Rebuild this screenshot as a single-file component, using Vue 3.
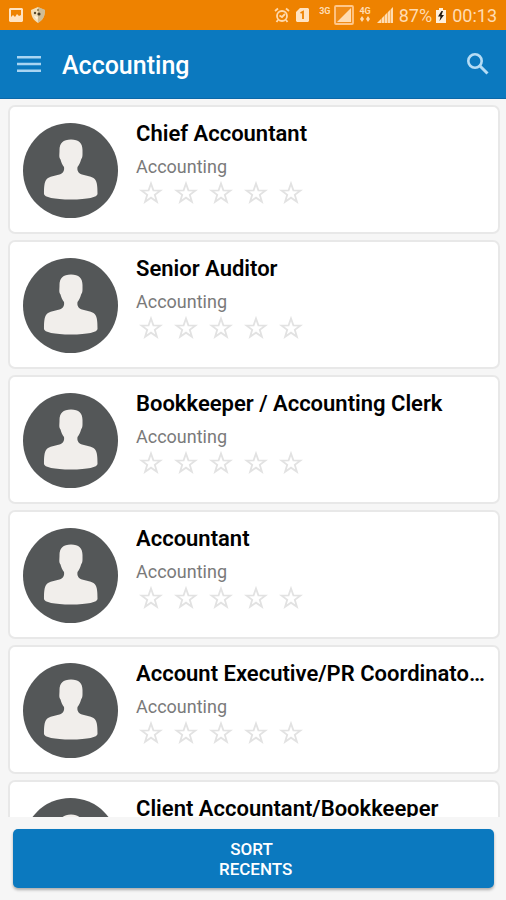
<script setup>
import { ref } from "vue";

const category = "Accounting";
const jobs = ref([
  { id: 1, title: "Chief Accountant" },
  { id: 2, title: "Senior Auditor" },
  { id: 3, title: "Bookkeeper / Accounting Clerk" },
  { id: 4, title: "Accountant" },
  { id: 5, title: "Account Executive/PR Coordinator Assistant" },
  { id: 6, title: "Client Accountant/Bookkeeper" },
]);
const sortLabel = "SORT \n RECENTS";
</script>

<template>
  <div class="screen">
    <div class="status-bar">
      <div class="status-group">
        <svg width="16" height="16" viewBox="0 0 16 16">
          <path
            fill="#ffe3c2"
            fill-rule="evenodd"
            d="M2 1h12l1 1v12l-1 1H2l-1-1V2zM3 3v7l2-2 2 2 2-3 2 2 2-1V3z"
          />
        </svg>
        <svg width="16" height="16" viewBox="0 0 16 16">
          <path fill="#f3dfb8" d="M8 0l7 3c0 6-2 10-7 13C3 13 1 9 1 3z" />
          <path fill="#b8a780" d="M8 0l7 3c0 6-2 10-7 13z" opacity=".6" />
          <circle cx="5" cy="6" r="1.2" fill="#5b4a2a" />
          <circle cx="9" cy="7" r="1.6" fill="#4b3d24" />
          <circle cx="8" cy="3" r="1" fill="#8a7748" />
          <path fill="#fff3dc" d="M4 9l4 1-1 3z" />
        </svg>
      </div>
      <div class="status-group status-right">
        <svg width="16" height="16" viewBox="0 0 16 16" fill="none" stroke="#ffd9ac" stroke-width="1.8">
          <circle cx="8" cy="9" r="5" />
          <path d="M1 4l3-2.500M15 4l-3-2.500M5.500 8.500L8 10l3-3M4 13l-1.500 2M12 13l1.500 2" />
        </svg>
        <svg class="sim" width="13" height="16" viewBox="0 0 13 16">
          <path fill="#ffe3c2" d="M4 1h8l1 1v12l-1 1H1l-1-1V5z" />
          <path fill="none" stroke="#ee8200" stroke-width="1.8" d="M4.500 6L7 4.800V12" />
        </svg>
        <span class="network">3G</span>
        <svg width="20" height="20" viewBox="0 0 20 20">
          <rect x="1" y="1" width="18" height="18" rx="1" fill="#f08c18" stroke="#ffc78a" stroke-width="1.8" />
          <path fill="#ffdcb2" d="M17 3v14H3z" />
        </svg>
        <span class="network data">
          4G
          <svg width="10" height="6" viewBox="0 0 10 6" fill="#ffd9ac">
            <path d="M0 3l2-3 2 3-2 3zM6 3l2-3 2 3-2 3z" />
          </svg>
        </span>
        <svg width="16" height="16" viewBox="0 0 16 16">
          <path fill="#ffdcb2" d="M16 0v16H0z" />
          <path stroke="#ee8200" stroke-width=".5" d="M4.500 10v6M7.500 7v9M10.500 4v12M13.500 1v15" />
        </svg>
        <span class="battery-level">87%</span>
        <svg width="10" height="15" viewBox="0 0 10 15">
          <path fill="#fff0dc" d="M3 0h4v2h3v13H0V2h3z" />
          <path fill="#241a10" d="M5.500 3L2 8.500h2.500L3.500 13 8 7H5.500L7 3z" />
        </svg>
        <span class="clock">00:13</span>
      </div>
    </div>

    <header class="app-bar">
      <button class="icon-button" type="button" aria-label="Menu">
        <svg width="24" height="18" viewBox="0 0 24 18" stroke="#a9d5f2" stroke-width="2.4">
          <path d="M0 2.200h24M0 9h24M0 15.800h24" />
        </svg>
      </button>
      <h1>{{ category }}</h1>
      <button class="icon-button" type="button" aria-label="Search">
        <svg width="22" height="22" viewBox="0 0 22 22" fill="none" stroke="#b5dcf5">
          <circle cx="8" cy="8" r="6.700" stroke-width="2.600" />
          <path d="M13 13l7.500 7.500" stroke-width="3" />
        </svg>
      </button>
    </header>

    <main class="job-list">
      <article v-for="job in jobs" :key="job.id" class="job-card">
        <svg class="avatar" viewBox="0 0 95 95">
          <circle cx="47.500" cy="47.500" r="47.500" fill="#545758" />
          <path
            fill="#f1eeeb"
            d="M48 16.500C40 16.500 36.500 20.500 36.500 27c0 5-.8 7 1 9.500.8 3.500 2 5.500 3.500 7.500.5 3.500-.5 6-4.500 7.500-4 1.200-8 1.500-11.500 3.500-3.500 2.500-4 7-4 16 0 3 10 5.500 27 5.500S74.500 74 74.500 71c0-9-.5-13.500-4-16-3.500-2-7.500-2.300-11.500-3.500-4-1.500-5-4-4.500-7.500 1.500-2 2.800-4 3.600-7.500 1.800-2.500 1.400-4.500 1.400-9.500 0-6.500-3.500-10.500-11.500-10.500z"
          />
        </svg>
        <div class="job-info">
          <h2>{{ job.title }}</h2>
          <p>{{ category }}</p>
          <div class="rating" role="img" aria-label="0 of 5 stars">
            <svg v-for="n in 5" :key="n" width="24" height="24" viewBox="0 0 24 24">
              <path
                d="M12 2.500l2.400 6.900 7.200.1-5.800 4.300 2.100 7L12 16.700l-5.900 4.100 2.100-7-5.800-4.300 7.200-.1z"
              />
            </svg>
          </div>
        </div>
      </article>
    </main>

    <footer class="footer">
      <button class="sort-button" type="button">{{ sortLabel }}</button>
    </footer>
  </div>
</template>

<style>
body {
  margin: 0;
}
</style>

<style scoped>
.screen {
  display: flex;
  flex-direction: column;
  height: 100vh;
  background: #f6f6f6;
  font-family: Roboto, sans-serif;
}
.status-bar {
  flex: none;
  display: flex;
  justify-content: space-between;
  align-items: center;
  height: 30px;
  padding: 0 9px 0 8px;
  background: #ee8200;
  color: #ffdcb2;
}
.status-group {
  display: flex;
  align-items: center;
  gap: 6px;
}
.status-right {
  gap: 4px;
}
.sim {
  margin: 0 6px 0 2px;
}
.network {
  align-self: flex-start;
  padding-top: 4px;
  font-size: 9px;
  font-weight: 700;
  line-height: 10px;
}
.data {
  display: flex;
  flex-direction: column;
  align-items: center;
  padding-left: 1px;
  padding-right: 2px;
}
.battery-level,
.clock {
  padding-top: 2px;
  padding-left: 2px;
  font-size: 18px;
  line-height: 24px;
}
.app-bar {
  flex: none;
  display: flex;
  align-items: center;
  height: 69px;
  padding: 0 17px;
  background: #0b79bf;
  border-bottom: 1px solid #0b68a8;
  box-sizing: border-box;
}
.icon-button {
  display: flex;
  padding: 0;
  border: none;
  background: none;
  cursor: pointer;
}
h1 {
  flex: 1;
  margin: 0 0 0 21px;
  padding-top: 4px;
  color: #fff;
  font-size: 25px;
  font-weight: 500;
  line-height: 32px;
}
.job-list {
  flex: 1;
  min-height: 0;
  display: flex;
  flex-direction: column;
  gap: 6px;
  padding: 6px 6px 0 8px;
  overflow: hidden;
}
.job-card {
  flex: none;
  display: flex;
  gap: 18px;
  padding: 16px 9px 14px 13px;
  border: 2px solid #e8e8e8;
  border-radius: 7px;
  background: #fff;
}
.avatar {
  flex: none;
  width: 95px;
  height: 95px;
}
.job-info {
  flex: 1;
  min-width: 0;
}
h2 {
  margin: -2px 0 8px;
  overflow: hidden;
  color: #000;
  font-size: 22px;
  font-weight: 600;
  line-height: 26px;
  text-overflow: ellipsis;
  white-space: nowrap;
}
p {
  margin: 0;
  color: #7a7a7a;
  font-size: 18px;
  line-height: 24px;
}
.rating {
  display: flex;
  gap: 11px;
  margin: 2px 3px;
}
.rating path {
  fill: none;
  stroke: #e2e2e2;
  stroke-width: 1.8;
}
.footer {
  flex: none;
  padding: 12px 12px 12px 13px;
}
.sort-button {
  display: block;
  width: 100%;
  padding: 10px 0 9px;
  border: none;
  border-radius: 5px;
  background: #0b79bf;
  box-shadow: 0 2px 3px rgba(0, 0, 0, 0.3);
  color: #fff;
  font-family: inherit;
  font-size: 17px;
  font-weight: 500;
  line-height: 20px;
  text-align: center;
  white-space: pre;
  cursor: pointer;
}
</style>
